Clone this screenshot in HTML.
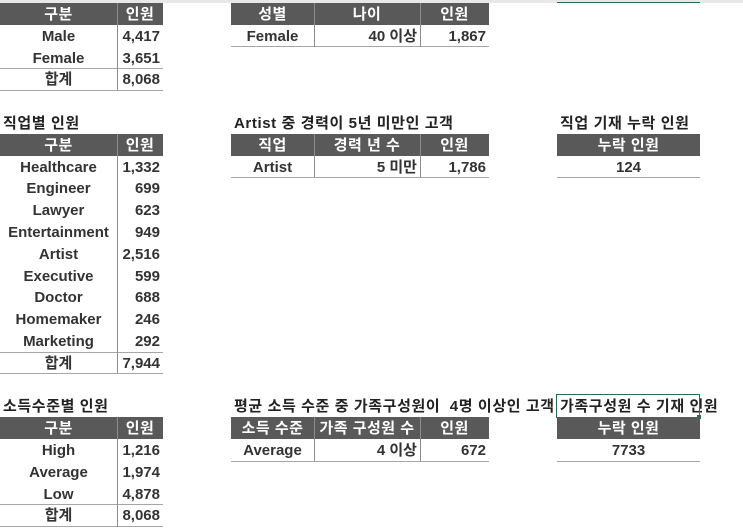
<!DOCTYPE html>
<html><head><meta charset="utf-8"><style>
body{margin:0;width:743px;height:528px;background:#fff;position:relative;overflow:hidden;font-family:"Liberation Sans","Noto Sans CJK KR",sans-serif}
.c{position:absolute;height:21.8px;line-height:24px;font-weight:bold;font-size:15px;color:#333;white-space:nowrap;box-sizing:border-box;overflow:visible}
.h{background:#595959;color:#fff;text-align:center;letter-spacing:0.5px}
.ctr{text-align:center}.r{text-align:right;padding-right:3px}
.t{position:absolute;font-weight:bold;font-size:15px;color:#222;white-space:nowrap;line-height:24px;height:22px;letter-spacing:0.6px}
.hl{position:absolute;height:1px;background:#a6a6a6}
.vl{position:absolute;width:1px;background:#8c8c8c}
</style></head><body>
<div style="position:absolute;left:0;top:0;width:743px;height:3px;background:#e8e8e8"></div>
<div style="position:absolute;left:557px;top:2px;width:143px;height:1px;background:#217346"></div>

<div class="c h" style="left:0;top:3px;width:117px">구분</div>
<div class="c h" style="left:117px;top:3px;width:46px">인원</div>
<div class="c ctr" style="left:0;top:24.8px;width:117px">Male</div><div class="c r" style="left:117px;top:24.8px;width:46px">4,417</div>
<div class="c ctr" style="left:0;top:46.6px;width:117px">Female</div><div class="c r" style="left:117px;top:46.6px;width:46px">3,651</div>
<div class="c ctr" style="left:0;top:68.4px;width:117px">합계</div><div class="c r" style="left:117px;top:68.4px;width:46px">8,068</div>
<div class="hl" style="left:0;top:68px;width:163px"></div><div class="hl" style="left:0;top:90px;width:163px"></div>
<div class="vl" style="left:117px;top:3px;height:87px"></div>

<div class="t" style="left:3px;top:112px">직업별 인원</div>
<div class="c h" style="left:0;top:133.8px;width:117px">구분</div>
<div class="c h" style="left:117px;top:133.8px;width:46px">인원</div>
<div class="c ctr" style="left:0;top:155.6px;width:117px">Healthcare</div><div class="c r" style="left:117px;top:155.6px;width:46px">1,332</div>
<div class="c ctr" style="left:0;top:177.4px;width:117px">Engineer</div><div class="c r" style="left:117px;top:177.4px;width:46px">699</div>
<div class="c ctr" style="left:0;top:199.2px;width:117px">Lawyer</div><div class="c r" style="left:117px;top:199.2px;width:46px">623</div>
<div class="c ctr" style="left:0;top:221px;width:117px">Entertainment</div><div class="c r" style="left:117px;top:221px;width:46px">949</div>
<div class="c ctr" style="left:0;top:242.8px;width:117px">Artist</div><div class="c r" style="left:117px;top:242.8px;width:46px">2,516</div>
<div class="c ctr" style="left:0;top:264.6px;width:117px">Executive</div><div class="c r" style="left:117px;top:264.6px;width:46px">599</div>
<div class="c ctr" style="left:0;top:286.4px;width:117px">Doctor</div><div class="c r" style="left:117px;top:286.4px;width:46px">688</div>
<div class="c ctr" style="left:0;top:308.2px;width:117px">Homemaker</div><div class="c r" style="left:117px;top:308.2px;width:46px">246</div>
<div class="c ctr" style="left:0;top:330px;width:117px">Marketing</div><div class="c r" style="left:117px;top:330px;width:46px">292</div>
<div class="c ctr" style="left:0;top:351.8px;width:117px">합계</div><div class="c r" style="left:117px;top:351.8px;width:46px">7,944</div>
<div class="hl" style="left:0;top:351.5px;width:163px"></div><div class="hl" style="left:0;top:373.3px;width:163px"></div>
<div class="vl" style="left:117px;top:134px;height:239px"></div>

<div class="t" style="left:3px;top:395.4px">소득수준별 인원</div>
<div class="c h" style="left:0;top:417.2px;width:117px">구분</div>
<div class="c h" style="left:117px;top:417.2px;width:46px">인원</div>
<div class="c ctr" style="left:0;top:439px;width:117px">High</div><div class="c r" style="left:117px;top:439px;width:46px">1,216</div>
<div class="c ctr" style="left:0;top:460.8px;width:117px">Average</div><div class="c r" style="left:117px;top:460.8px;width:46px">1,974</div>
<div class="c ctr" style="left:0;top:482.6px;width:117px">Low</div><div class="c r" style="left:117px;top:482.6px;width:46px">4,878</div>
<div class="c ctr" style="left:0;top:504.4px;width:117px">합계</div><div class="c r" style="left:117px;top:504.4px;width:46px">8,068</div>
<div class="hl" style="left:0;top:504px;width:163px"></div><div class="hl" style="left:0;top:526px;width:163px"></div>
<div class="vl" style="left:117px;top:417px;height:110px"></div>

<div class="c h" style="left:231px;top:3px;width:83px">성별</div>
<div class="c h" style="left:314px;top:3px;width:106px">나이</div>
<div class="c h" style="left:420px;top:3px;width:69px">인원</div>
<div class="c ctr" style="left:231px;top:24.8px;width:83px">Female</div>
<div class="c r" style="left:314px;top:24.8px;width:106px">40 이상</div>
<div class="c r" style="left:420px;top:24.8px;width:69px">1,867</div>
<div class="hl" style="left:231px;top:46.3px;width:258px"></div>
<div class="vl" style="left:314px;top:3px;height:44px"></div><div class="vl" style="left:420px;top:3px;height:44px"></div>

<div class="t" style="left:234px;top:112px">Artist 중 경력이 5년 미만인 고객</div>
<div class="c h" style="left:231px;top:133.8px;width:83px">직업</div>
<div class="c h" style="left:314px;top:133.8px;width:106px">경력 년 수</div>
<div class="c h" style="left:420px;top:133.8px;width:69px">인원</div>
<div class="c ctr" style="left:231px;top:155.6px;width:83px">Artist</div>
<div class="c r" style="left:314px;top:155.6px;width:106px">5 미만</div>
<div class="c r" style="left:420px;top:155.6px;width:69px">1,786</div>
<div class="hl" style="left:231px;top:177px;width:258px"></div>
<div class="vl" style="left:314px;top:134px;height:43px"></div><div class="vl" style="left:420px;top:134px;height:43px"></div>

<div class="t" style="left:560px;top:112px">직업 기재 누락 인원</div>
<div class="c h" style="left:557px;top:133.8px;width:143px">누락 인원</div>
<div class="c ctr" style="left:557px;top:155.6px;width:143px">124</div>
<div class="hl" style="left:557px;top:177px;width:143px"></div>

<div class="t" style="left:234px;top:395.4px">평균 소득 수준 중 가족구성원이&nbsp; 4명 이상인 고객</div>
<div class="c h" style="left:231px;top:417.2px;width:83px">소득 수준</div>
<div class="c h" style="left:314px;top:417.2px;width:106px">가족 구성원 수</div>
<div class="c h" style="left:420px;top:417.2px;width:69px">인원</div>
<div class="c ctr" style="left:231px;top:439px;width:83px">Average</div>
<div class="c r" style="left:314px;top:439px;width:106px">4 이상</div>
<div class="c r" style="left:420px;top:439px;width:69px">672</div>
<div class="hl" style="left:231px;top:460.5px;width:258px"></div>
<div class="vl" style="left:314px;top:417px;height:44px"></div><div class="vl" style="left:420px;top:417px;height:44px"></div>

<div class="t" style="left:560px;top:395.4px">가족구성원 수 기재 인원</div>
<div style="position:absolute;left:556px;top:394px;width:142px;height:22px;border:1.5px solid #217346"></div>
<div style="position:absolute;left:697px;top:415px;width:4px;height:4px;background:#217346"></div>
<div class="c h" style="left:557px;top:417.2px;width:143px">누락 인원</div>
<div class="c ctr" style="left:557px;top:439px;width:143px">7733</div>
<div class="hl" style="left:557px;top:460.5px;width:143px"></div>
</body></html>
